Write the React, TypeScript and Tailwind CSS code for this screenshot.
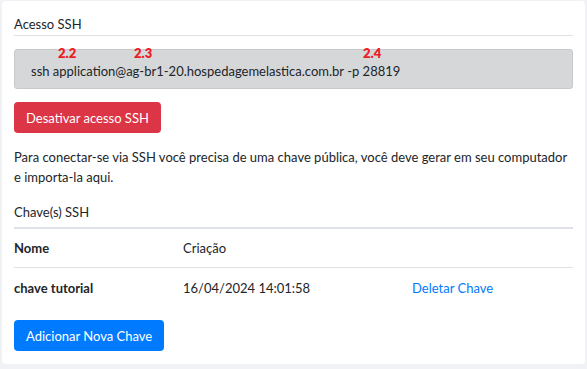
export default function App() {
  return (
    <div className="min-h-[369px] bg-[#f1f2f5] pt-[1px] px-[2px] pb-2 text-[#212529] text-[13px] leading-[20px] font-['Lato',sans-serif]">
      <div className="bg-white rounded-[4px] px-3 pt-[13px] pb-[13px]">
        <div className="border-b border-[#dee2e6] pb-[1px]">Acesso SSH</div>

        <div className="relative mt-[13px] bg-[#d6d7d9] border border-[#c8c9cb] rounded-[3px] h-[40px] flex items-center pl-[16px] pt-[4px]">
          ssh application@ag-br1-20.hospedagemelastica.com.br -p 28819
          <span className="absolute top-[-3px] left-[43px] text-[#ee1c25] font-extrabold text-[13px] leading-[13px]">2.2</span>
          <span className="absolute top-[-3px] left-[119px] text-[#ee1c25] font-extrabold text-[13px] leading-[13px]">2.3</span>
          <span className="absolute top-[-3px] left-[348px] text-[#ee1c25] font-extrabold text-[13px] leading-[13px]">2.4</span>
        </div>

        <button className="mt-[13px] h-[31px] px-[12px] rounded-[4px] bg-[#dc3545] text-white">
          Desativar acesso SSH
        </button>

        <p className="mt-[14px]">
          Para conectar-se via SSH você precisa de uma chave pública, você deve gerar em seu computador e importa-la aqui.
        </p>

        <div className="mt-[15px] pb-[5px]">Chave(s) SSH</div>
        <table className="w-full border-t-2 border-[#dee2e6]">
          <tbody>
            <tr className="border-b border-[#dee2e6] h-[39px]">
              <td className="font-bold w-[169px]">Nome</td>
              <td className="w-[229px]">Criação</td>
              <td></td>
            </tr>
            <tr className="h-[42px]">
              <td className="font-bold">chave tutorial</td>
              <td>16/04/2024 14:01:58</td>
              <td className="text-[#007bff]">Deletar Chave</td>
            </tr>
          </tbody>
        </table>

        <button className="mt-[11px] h-[31px] px-[12px] rounded-[4px] bg-[#007bff] text-white">
          Adicionar Nova Chave
        </button>
      </div>
    </div>
  );
}
